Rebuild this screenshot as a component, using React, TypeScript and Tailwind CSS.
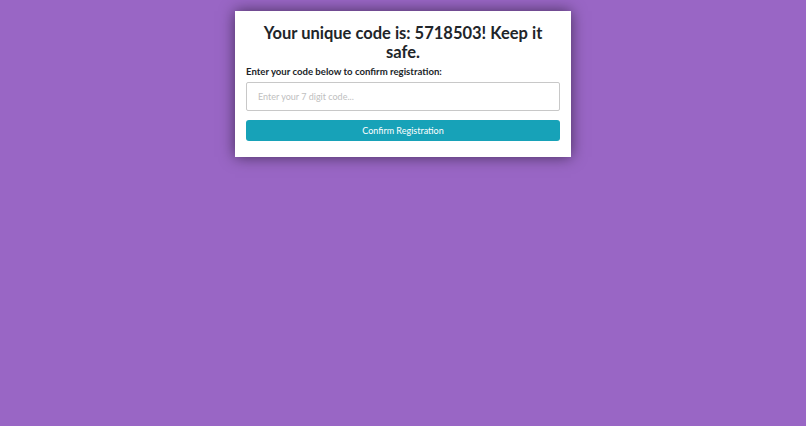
import React from "react";

export default function App() {
  return (
    <div
      className="min-h-[426px] w-full bg-[#9966c5] flex justify-center items-start pt-[11px]"
      style={{ fontFamily: 'Lato, "Noto Sans", sans-serif' }}
    >
      <div className="w-[336px] bg-white px-[11px] pt-[13px] pb-[16px] shadow-[0_0_14px_rgba(0,0,0,0.55)] flex flex-col">
        <h1 className="text-[16.5px] leading-[19px] font-bold text-[#212529] text-center px-[14px]">
          Your unique code is: 5718503! Keep it safe.
        </h1>
        <label className="mt-[3px] text-[9.6px] leading-[14px] font-bold text-[#212529]">
          Enter your code below to confirm registration:
        </label>
        <input
          className="mt-[3px] h-[29px] w-full border border-[#c8c8c8] rounded-[2px] px-[11px] text-[9px] outline-none placeholder:text-[#c0c0c0]"
          placeholder="Enter your 7 digit code..."
        />
        <button className="mt-[9px] h-[21px] w-full rounded-[3px] bg-[#17a2b8] text-white text-[9px]">
          Confirm Registration
        </button>
      </div>
    </div>
  );
}
